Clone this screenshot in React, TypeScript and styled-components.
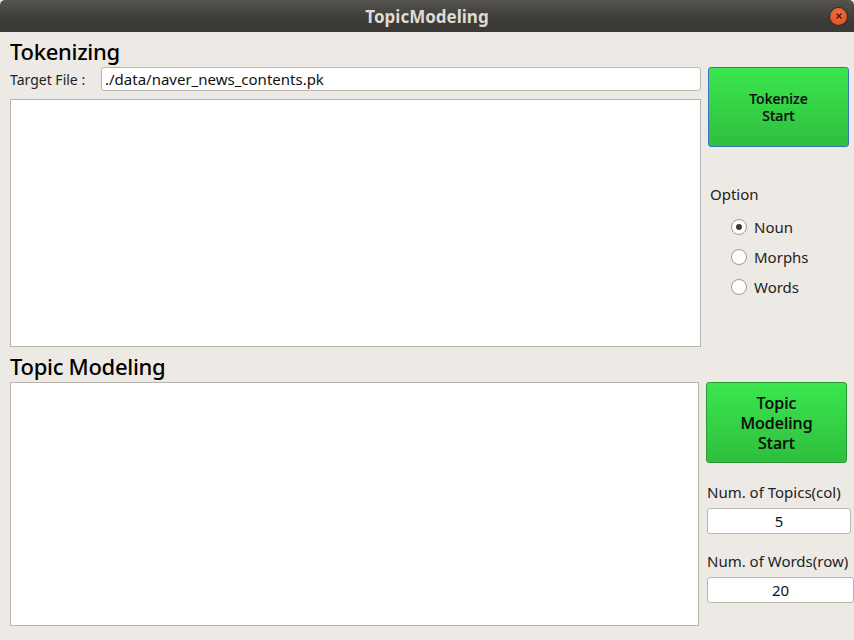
import React from "react";
import styled, { createGlobalStyle } from "styled-components";

const Global = createGlobalStyle`
  html, body { margin: 0; padding: 0; background: #edeae5; }
  body { font-family: "Noto Sans", "Open Sans", sans-serif; color: #1a1a1a; }
`;

const Window = styled.div`
  width: 854px;
  height: 640px;
  display: flex;
  flex-direction: column;
  background: #edeae5;
  overflow: hidden;
`;

const TitleBar = styled.div`
  height: 32px;
  flex: 0 0 32px;
  display: grid;
  grid-template-columns: 40px 1fr 40px;
  align-items: center;
  background: linear-gradient(#55534e, #3d3c38 60%, #3a3935);
  border-radius: 5px 5px 0 0;
`;

const Title = styled.div`
  grid-column: 2;
  text-align: center;
  font-family: "Noto Sans", sans-serif;
  font-weight: 700;
  font-size: 17px;
  color: #dfdbd2;
`;

const CloseBtn = styled.div`
  grid-column: 3;
  justify-self: end;
  margin-right: 7px;
  width: 17px;
  height: 17px;
  border-radius: 50%;
  background: radial-gradient(circle at 50% 35%, #f0703f, #e2481c);
  box-shadow: 0 0 0 1px #2b2a27;
  display: flex;
  align-items: center;
  justify-content: center;
  svg { display: block; }
`;

const Body = styled.div`
  flex: 1;
  display: flex;
  flex-direction: column;
  padding: 0 0 0 10px;
`;

const Section = styled.div<{ $left: number; $gap: number }>`
  display: grid;
  grid-template-columns: ${(p) => p.$left}px 1fr;
  column-gap: ${(p) => p.$gap}px;
`;

const Heading = styled.div<{ $h: number }>`
  grid-column: 1 / 3;
  height: ${(p) => p.$h}px;
  display: flex;
  align-items: flex-end;
  font-size: 22px;
  font-weight: 500;
  line-height: 32px;
  color: #000;
  letter-spacing: -0.3px;
`;

const LeftCol = styled.div`
  display: flex;
  flex-direction: column;
`;

const RightCol = styled.div`
  display: flex;
  flex-direction: column;
`;

const TargetRow = styled.div`
  display: flex;
  align-items: center;
  height: 24px;
  margin-bottom: 8px;
`;

const Label = styled.div`
  width: 91px;
  font-size: 14px;
  color: #222;
`;

const TextInput = styled.div<{ $w?: number; $center?: boolean }>`
  box-sizing: border-box;
  ${(p) => (p.$w ? `width: ${p.$w}px;` : "flex: 1;")}
  height: 100%;
  background: #fff;
  border: 1px solid #bab6b0;
  border-radius: 3px;
  display: flex;
  align-items: center;
  justify-content: ${(p) => (p.$center ? "center" : "flex-start")};
  padding: 0 3px;
  font-size: 15px;
  color: #111;
`;

const TextArea = styled.div<{ $h: number }>`
  box-sizing: border-box;
  height: ${(p) => p.$h}px;
  background: #fff;
  border: 1px solid #b8b4ae;
`;

const GreenButton = styled.div<{ $h: number; $border: string; $size: number; $lh: number }>`
  box-sizing: border-box;
  width: 141px;
  height: ${(p) => p.$h}px;
  border: 1px solid ${(p) => p.$border};
  border-radius: 3px;
  background: linear-gradient(#3be64e, #2fbf3e);
  display: flex;
  align-items: center;
  justify-content: center;
  text-align: center;
  font-size: ${(p) => p.$size}px;
  line-height: ${(p) => p.$lh}px;
  font-weight: 500;
  color: #0c0c0c;
  -webkit-text-stroke: 0.2px #0c0c0c;
`;

const OptionTitle = styled.div`
  margin: 35px 0 0 2px;
  font-size: 15px;
  line-height: 24px;
  color: #222;
`;

const RadioList = styled.div`
  display: flex;
  flex-direction: column;
  margin: 6px 0 0 23px;
`;

const RadioRow = styled.div`
  display: flex;
  align-items: center;
  height: 30px;
  font-size: 15px;
  color: #222;
`;

const RadioCircle = styled.span<{ $checked?: boolean }>`
  box-sizing: border-box;
  width: 16px;
  height: 16px;
  margin-right: 7px;
  border-radius: 50%;
  border: 1px solid #9d9a95;
  background: #fff;
  display: flex;
  align-items: center;
  justify-content: center;
  &::after {
    content: "";
    width: 6px;
    height: 6px;
    border-radius: 50%;
    background: ${(p) => (p.$checked ? "#3a3a3a" : "transparent")};
  }
`;

const FieldLabel = styled.div<{ $mt: number }>`
  margin: ${(p) => p.$mt}px 0 0 1px;
  height: 24px;
  line-height: 24px;
  font-size: 15px;
  color: #222;
  white-space: nowrap;
`;

const FieldBox = styled.div<{ $w: number }>`
  margin: 4px 0 0 1px;
  height: 26px;
  width: ${(p) => p.$w}px;
`;

export default function App() {
  return (
    <>
      <Global />
      <Window>
        <TitleBar>
          <Title>TopicModeling</Title>
          <CloseBtn>
            <svg width="8" height="8" viewBox="0 0 8 8">
              <path d="M1.5 1.5 L6.5 6.5 M6.5 1.5 L1.5 6.5" stroke="#3a1a0c" strokeWidth="1.3" />
            </svg>
          </CloseBtn>
        </TitleBar>
        <Body>
          <Section $left={691} $gap={7}>
            <Heading $h={35}>Tokenizing</Heading>
            <LeftCol>
              <TargetRow>
                <Label>Target File :</Label>
                <TextInput>./data/naver_news_contents.pk</TextInput>
              </TargetRow>
              <TextArea $h={248} />
            </LeftCol>
            <RightCol>
              <GreenButton $h={80} $border="#3a72c0" $size={14} $lh={17}>
                Tokenize
                <br />
                Start
              </GreenButton>
              <OptionTitle>Option</OptionTitle>
              <RadioList>
                <RadioRow>
                  <RadioCircle $checked />
                  Noun
                </RadioRow>
                <RadioRow>
                  <RadioCircle />
                  Morphs
                </RadioRow>
                <RadioRow>
                  <RadioCircle />
                  Words
                </RadioRow>
              </RadioList>
            </RightCol>
          </Section>
          <Section $left={689} $gap={7}>
            <Heading $h={35}>Topic Modeling</Heading>
            <LeftCol>
              <TextArea $h={244} />
            </LeftCol>
            <RightCol>
              <GreenButton $h={81} $border="#2c9a34" $size={16} $lh={20}>
                Topic
                <br />
                Modeling
                <br />
                Start
              </GreenButton>
              <FieldLabel $mt={17}>Num. of Topics(col)</FieldLabel>
              <FieldBox $w={144}>
                <TextInput $center>5</TextInput>
              </FieldBox>
              <FieldLabel $mt={15}>Num. of Words(row)</FieldLabel>
              <FieldBox $w={147}>
                <TextInput $center>20</TextInput>
              </FieldBox>
            </RightCol>
          </Section>
        </Body>
      </Window>
    </>
  );
}
